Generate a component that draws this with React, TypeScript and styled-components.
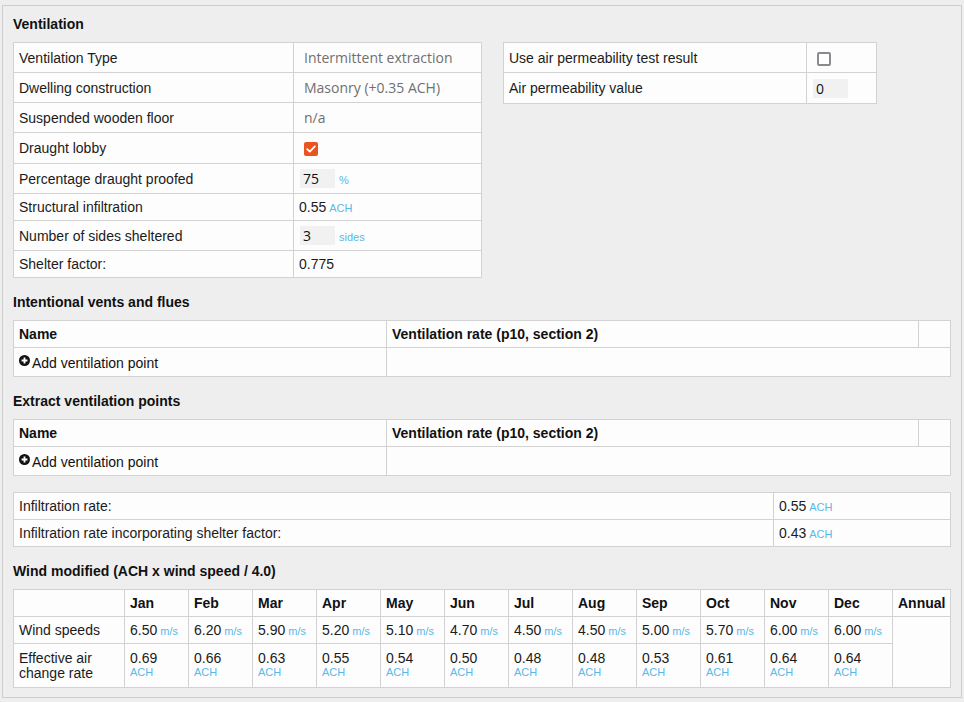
import React from 'react';
import styled, { createGlobalStyle } from 'styled-components';

const Global = createGlobalStyle`
  html, body { margin: 0; padding: 0; background: #eeeeee; }
  body {
    padding: 5px 0 0 2px;
    font-family: "Liberation Sans", Arial, sans-serif;
    font-size: 14px;
    color: #1b1b1b;
  }
  * { box-sizing: border-box; }
`;

const Panel = styled.div`
  width: 960px;
  border: 1px solid #cdcdcd;
  background: #eeeeee;
  padding: 10px 11px 9px 10px;
`;

const Title = styled.h3<{ $top?: number; $bottom?: number }>`
  margin: ${p => p.$top ?? 0}px 0 ${p => p.$bottom ?? 10}px 0;
  font-size: 14px;
  line-height: 16px;
  font-weight: bold;
  color: #111;
`;

const TopRow = styled.div`
  display: flex;
  align-items: flex-start;
  gap: 21px;
`;

const Table = styled.table<{ $w: number; $top?: number }>`
  width: ${p => p.$w}px;
  border-collapse: collapse;
  table-layout: fixed;
  background: #fdfdfd;
  margin-top: ${p => p.$top ?? 0}px;
`;

const Row = styled.tr<{ $h: number }>`
  height: ${p => p.$h}px;
`;

const Cell = styled.td<{ $pl?: number }>`
  border: 1px solid #d2d2d2;
  padding: 0 5px 0 ${p => p.$pl ?? 5}px;
  vertical-align: middle;
  line-height: 16px;
  font-size: 14px;
  color: #1b1b1b;
`;

const HeadCell = styled.th`
  border: 1px solid #d2d2d2;
  padding: 0 5px;
  vertical-align: middle;
  text-align: left;
  line-height: 16px;
  font-size: 14px;
  font-weight: bold;
  color: #111;
`;

const TallCell = styled(Cell)`
  vertical-align: top;
  padding-top: 7px;
  padding-bottom: 5px;
  line-height: 15px;
`;

const SelectValue = styled.span`
  font-family: "Open Sans", "Noto Sans", sans-serif;
  font-size: 14px;
  color: #707070;
  padding-left: 5px;
`;

const NumInput = styled.input`
  width: 35px;
  height: 19px;
  margin-left: 1px;
  border: none;
  background: #f1f1f1;
  padding: 0 3px;
  font-family: "Open Sans", "Noto Sans", sans-serif;
  font-size: 14px;
  color: #111;
  vertical-align: middle;
  outline: none;
`;

const Unit = styled.span<{ $gap?: number; $drop?: number }>`
  font-size: 11px;
  color: #5cb8e6;
  margin-left: ${p => p.$gap ?? 3}px;
  position: relative;
  top: ${p => p.$drop ?? 0}px;
`;

const UnitLine = styled.div`
  font-size: 11px;
  line-height: 13px;
  color: #5cb8e6;
`;

const CheckBox = styled.span<{ $on?: boolean }>`
  display: inline-flex;
  align-items: center;
  justify-content: center;
  width: 14px;
  height: 14px;
  border-radius: 2px;
  margin-left: 5px;
  vertical-align: middle;
  background: ${p => (p.$on ? '#e95420' : '#ffffff')};
  border: ${p => (p.$on ? 'none' : '2px solid #8c8a8f')};
`;

const AddLink = styled.span`
  display: inline-flex;
  align-items: flex-start;
  gap: 2px;
  color: #111;
`;

const PlusIcon = () => (
  <svg width="11" height="11" viewBox="0 0 12 12" aria-hidden>
    <circle cx="6" cy="6" r="6" fill="#111" />
    <path d="M6 2.8v6.4M2.8 6h6.4" stroke="#fff" strokeWidth="2" />
  </svg>
);

const CheckMark = () => (
  <svg width="10" height="8" viewBox="0 0 10 8" aria-hidden>
    <path d="M1.2 4.2 L3.8 6.6 L8.8 1.4" fill="none" stroke="#fff" strokeWidth="1.8" strokeLinecap="round" strokeLinejoin="round" />
  </svg>
);

const months = ['Jan', 'Feb', 'Mar', 'Apr', 'May', 'Jun', 'Jul', 'Aug', 'Sep', 'Oct', 'Nov', 'Dec'];
const wind = ['6.50', '6.20', '5.90', '5.20', '5.10', '4.70', '4.50', '4.50', '5.00', '5.70', '6.00', '6.00'];
const eff = ['0.69', '0.66', '0.63', '0.55', '0.54', '0.50', '0.48', '0.48', '0.53', '0.61', '0.64', '0.64'];

const VentTable: React.FC = () => (
  <Table $w={937}>
    <colgroup>
      <col style={{ width: 373 }} />
      <col style={{ width: 532 }} />
      <col style={{ width: 32 }} />
    </colgroup>
    <tbody>
      <Row $h={27}>
        <HeadCell>Name</HeadCell>
        <HeadCell>Ventilation rate (p10, section 2)</HeadCell>
        <HeadCell />
      </Row>
      <Row $h={29}>
        <Cell>
          <AddLink>
            <PlusIcon />
            Add ventilation point
          </AddLink>
        </Cell>
        <Cell colSpan={2} />
      </Row>
    </tbody>
  </Table>
);

export default function App() {
  return (
    <>
      <Global />
      <Panel>
        <Title>Ventilation</Title>
        <TopRow>
          <Table $w={468}>
            <colgroup>
              <col style={{ width: 280 }} />
              <col style={{ width: 188 }} />
            </colgroup>
            <tbody>
              <Row $h={30}>
                <Cell>Ventilation Type</Cell>
                <Cell><SelectValue>Intermittent extraction</SelectValue></Cell>
              </Row>
              <Row $h={30}>
                <Cell>Dwelling construction</Cell>
                <Cell><SelectValue>Masonry (+0.35 ACH)</SelectValue></Cell>
              </Row>
              <Row $h={30}>
                <Cell>Suspended wooden floor</Cell>
                <Cell><SelectValue>n/a</SelectValue></Cell>
              </Row>
              <Row $h={31}>
                <Cell>Draught lobby</Cell>
                <Cell><CheckBox $on><CheckMark /></CheckBox></Cell>
              </Row>
              <Row $h={30}>
                <Cell>Percentage draught proofed</Cell>
                <Cell><NumInput defaultValue="75" /><Unit $gap={4} $drop={2}>%</Unit></Cell>
              </Row>
              <Row $h={27}>
                <Cell>Structural infiltration</Cell>
                <Cell>0.55<Unit>ACH</Unit></Cell>
              </Row>
              <Row $h={30}>
                <Cell>Number of sides sheltered</Cell>
                <Cell><NumInput defaultValue="3" /><Unit $gap={4} $drop={2}>sides</Unit></Cell>
              </Row>
              <Row $h={27}>
                <Cell>Shelter factor:</Cell>
                <Cell>0.775</Cell>
              </Row>
            </tbody>
          </Table>
          <Table $w={373}>
            <colgroup>
              <col style={{ width: 303 }} />
              <col style={{ width: 70 }} />
            </colgroup>
            <tbody>
              <Row $h={30}>
                <Cell>Use air permeability test result</Cell>
                <Cell><CheckBox /></Cell>
              </Row>
              <Row $h={31}>
                <Cell>Air permeability value</Cell>
                <Cell><NumInput defaultValue="0" /></Cell>
              </Row>
            </tbody>
          </Table>
        </TopRow>

        <Title $top={16}>Intentional vents and flues</Title>
        <VentTable />

        <Title $top={16}>Extract ventilation points</Title>
        <VentTable />

        <Table $w={937} $top={16}>
          <colgroup>
            <col style={{ width: 760 }} />
            <col style={{ width: 177 }} />
          </colgroup>
          <tbody>
            <Row $h={27}>
              <Cell>Infiltration rate:</Cell>
              <Cell>0.55<Unit>ACH</Unit></Cell>
            </Row>
            <Row $h={27}>
              <Cell>Infiltration rate incorporating shelter factor:</Cell>
              <Cell>0.43<Unit>ACH</Unit></Cell>
            </Row>
          </tbody>
        </Table>

        <Title $top={16} $bottom={10}>Wind modified (ACH x wind speed / 4.0)</Title>
        <Table $w={937}>
          <colgroup>
            <col style={{ width: 111 }} />
            {months.map(m => (
              <col key={m} style={{ width: 64 }} />
            ))}
            <col style={{ width: 58 }} />
          </colgroup>
          <tbody>
            <Row $h={27}>
              <HeadCell />
              {months.map(m => (
                <HeadCell key={m}>{m}</HeadCell>
              ))}
              <HeadCell>Annual</HeadCell>
            </Row>
            <Row $h={27}>
              <Cell>Wind speeds</Cell>
              {wind.map((w, i) => (
                <Cell key={i}>{w}<Unit>m/s</Unit></Cell>
              ))}
              <Cell rowSpan={2} />
            </Row>
            <Row $h={44}>
              <TallCell>Effective air change rate</TallCell>
              {eff.map((e, i) => (
                <TallCell key={i}>
                  {e}
                  <UnitLine>ACH</UnitLine>
                </TallCell>
              ))}
            </Row>
          </tbody>
        </Table>
      </Panel>
    </>
  );
}
